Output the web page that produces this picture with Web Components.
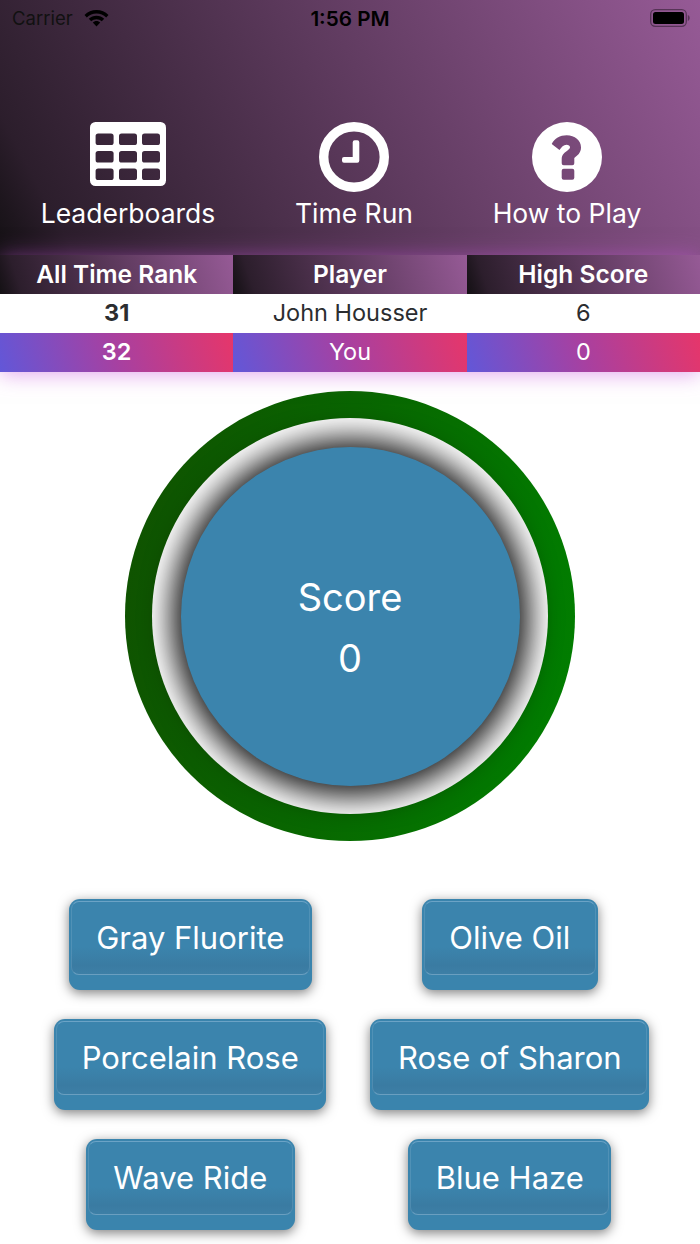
<!DOCTYPE html>
<html lang="en">
<head>
<meta charset="utf-8">
<title>Score</title>
<style>
  html, body {
    margin: 0;
    padding: 0;
    background: #fff;
    font-family: Inter, "Liberation Sans", sans-serif;
  }
</style>
</head>
<body>
<game-screen></game-screen>

<script>
(() => {
  const darkPurple = (angle) => `linear-gradient(${angle}deg, #141114 0%, #1e161e 4%, #2c1e2c 9%, #965a96 100%)`;
  const redViolet = (angle) => `linear-gradient(${angle}deg, #6257d8 0%, #a840a0 50%, #e6366a 100%)`;

  const holes = [];
  for (const y of [11.4, 29, 46.4]) {
    for (const x of [5.6, 29, 52]) {
      holes.push(`<rect x="${x}" y="${y}" width="18" height="11.6" rx="2.6" fill="#000"/>`);
    }
  }

  const ICONS = {
    table: `<svg width="76" height="64" viewBox="0 0 76 64">
      <mask id="grid"><rect width="76" height="64" rx="5.5" fill="#fff"/>${holes.join("")}</mask>
      <rect width="76" height="64" fill="#fff" mask="url(#grid)"/>
    </svg>`,
    clock: `<svg width="70" height="70" viewBox="0 0 70 70">
      <circle cx="35" cy="35" r="30.300" fill="none" stroke="#fff" stroke-width="9.400"/>
      <path fill="#fff" d="M35.700 18.300H38.300a2 2 0 0 1 2 2V38.700a2 2 0 0 1-2 2H25a2 2 0 0 1-2-2V37a2 2 0 0 1 2-2H33.700V20.300a2 2 0 0 1 2-2z"/>
    </svg>`,
    help: `<svg width="70" height="70" viewBox="0 0 70 70">
      <path fill="#fff" fill-rule="evenodd" d="M35 0a35 35 0 1 0 0 70a35 35 0 1 0 0-70z
        M19.700 22C22.500 16.500 28 13.300 34.700 13.300C42.800 13.300 49 18.300 49 25.500C49 31 45.300 33.600 42.300 36V41.300a2 2 0 0 1-2 2H31.700a2 2 0 0 1-2-2V37C29.700 32.500 33 30.300 35.500 28.500C37.200 27.300 38 26.400 38 25.300C38 23.600 36.500 22.700 34.500 22.700C31.500 22.700 29.500 25 27.500 28z
        M31.700 46.700H40.300a2 2 0 0 1 2 2V55.700a2 2 0 0 1-2 2H31.700a2 2 0 0 1-2-2V48.700a2 2 0 0 1 2-2z"/>
    </svg>`,
  };

  class StatusBar extends HTMLElement {
    constructor() {
      super();
      this.attachShadow({ mode: "open" }).innerHTML = `
        <style>
          :host {
            display: grid;
            grid-template-columns: 1fr auto 1fr;
            align-items: center;
            height: 36px;
            padding: 0 12px;
            color: #000;
            font-size: 18.5px;
          }
          .left { display: flex; align-items: center; gap: 11px; color: #111; }
          .time { font-weight: 600; font-size: 20.7px; }
          .right { display: flex; justify-content: flex-end; margin-right: -3px; }
          svg { display: block; }
        </style>
        <div class="left">
          <span>Carrier</span>
          <svg width="25" height="18" viewBox="0.500 1 25 17">
            <path d="M13 1.500C8.300 1.500 4.200 3.300 1 6.500l2.300 2.500C6 6.500 9.300 5 13 5s7 1.500 9.700 4L25 6.500C21.800 3.300 17.700 1.500 13 1.500z"/>
            <path d="M13 7.200c-3 0-5.600 1.100-7.700 3.100l2.400 2.500C9.100 11.500 11 10.700 13 10.700s3.900.8 5.300 2.100l2.400-2.500c-2.100-2-4.700-3.100-7.700-3.100z"/>
            <path d="M13 12.500c-1.500 0-2.800.6-3.700 1.500l3.700 3.900 3.700-3.900c-.9-.9-2.200-1.500-3.700-1.500z"/>
          </svg>
        </div>
        <span class="time">1:56 PM</span>
        <div class="right">
          <svg width="41" height="18" viewBox="0 0 41 18">
            <rect x=".7" y=".7" width="35.600" height="16.600" rx="4.500" fill="none" stroke="#000" stroke-opacity=".4" stroke-width="1.300"/>
            <rect x="3" y="3" width="31" height="12" rx="2.500"/>
            <path d="M37.800 6c1.200.4 1.900 1.600 1.900 3s-.7 2.600-1.900 3z" fill-opacity=".4"/>
          </svg>
        </div>
      `;
    }
  }

  class NavAction extends HTMLElement {
    constructor() {
      super();
      this.attachShadow({ mode: "open" }).innerHTML = `
        <style>
          :host {
            display: flex;
            flex-direction: column;
            align-items: center;
            color: #fff;
            font-size: 26.5px;
            line-height: 32px;
          }
          .icon { height: 70px; display: flex; align-items: flex-start; margin-bottom: 5px; }
          svg { display: block; }
        </style>
        <div class="icon">${ICONS[this.getAttribute("icon")] || ""}</div>
        <slot></slot>
      `;
    }
  }

  class TableCell extends HTMLElement {
    constructor() {
      super();
      this.attachShadow({ mode: "open" }).innerHTML = `
        <style>
          :host {
            display: flex;
            align-items: center;
            justify-content: center;
            box-sizing: border-box;
            height: 39px;
            padding-bottom: 2px;
            font-size: 23.5px;
            color: #2b2d30;
          }
          :host([variant="head"]) {
            background: ${darkPurple(72)};
            color: #fff;
            font-weight: 600;
            font-size: 24.5px;
          }
          :host([variant="mine"]) {
            background: ${redViolet(72)};
            color: #fff;
          }
          :host([strong]) { font-weight: 700; }
          :host([variant="mine"][strong]) { font-weight: 600; }
        </style>
        <slot></slot>
      `;
    }
  }

  class RankTable extends HTMLElement {
    constructor() {
      super();
      this.attachShadow({ mode: "open" }).innerHTML = `
        <style>
          :host {
            display: grid;
            grid-template-columns: repeat(3, 1fr);
            background: #fff;
            position: relative;
            box-shadow: 0 2px 20px rgba(200, 90, 220, .55);
          }
        </style>
        <slot></slot>
      `;
    }
  }

  class ScoreDial extends HTMLElement {
    constructor() {
      super();
      this.attachShadow({ mode: "open" }).innerHTML = `
        <style>
          :host {
            display: flex;
            align-items: center;
            justify-content: center;
            box-sizing: border-box;
            width: 450px;
            height: 450px;
            padding: 27px;
            border-radius: 50%;
            background: linear-gradient(100deg, #105000, #008000);
          }
          .plate {
            flex: 1;
            align-self: stretch;
            display: flex;
            align-items: center;
            justify-content: center;
            border-radius: 50%;
            background: #fff;
          }
          .face {
            box-sizing: border-box;
            display: flex;
            flex-direction: column;
            align-items: center;
            justify-content: center;
            gap: 19px;
            width: 339px;
            height: 339px;
            padding-top: 22px;
            border-radius: 50%;
            background: #3b84ad;
            box-shadow: 0 1px 30px 10px rgba(0, 0, 0, .9);
            color: #fff;
            font-size: 38px;
            line-height: 42px;
          }
        </style>
        <div class="plate">
          <div class="face">
            <span>Score</span>
            <span>${this.getAttribute("value") || "0"}</span>
          </div>
        </div>
      `;
    }
  }

  class AnswerButton extends HTMLElement {
    constructor() {
      super();
      this.attachShadow({ mode: "open" }).innerHTML = `
        <style>
          :host {
            display: block;
            box-sizing: border-box;
            height: 91px;
            padding: 2px 2px 15px;
            border-radius: 11px;
            background: #3a84ad;
            box-shadow: 0 3px 12px rgba(0, 0, 0, .5);
            color: #fff;
            font-size: 31px;
          }
          .face {
            box-sizing: border-box;
            height: 100%;
            display: flex;
            align-items: center;
            justify-content: center;
            padding: 0 24.500px 2px;
            border-radius: 8px;
            border: 1px solid rgba(120, 170, 200, .35);
            border-top-color: #6ba3c6;
            border-bottom-color: #6a9fc0;
            background: linear-gradient(to bottom, #3b84ad 0%, #3b84ad 62%, #3a7ba2 88%, #3d7fa6 100%);
            white-space: nowrap;
          }
        </style>
        <div class="face"><slot></slot></div>
      `;
    }
  }

  class AnswerGrid extends HTMLElement {
    constructor() {
      super();
      this.attachShadow({ mode: "open" }).innerHTML = `
        <style>
          :host {
            display: grid;
            grid-template-columns: 319.500px 319.500px;
            justify-content: center;
            justify-items: center;
            row-gap: 29px;
          }
        </style>
        <slot></slot>
      `;
    }
  }

  class GameScreen extends HTMLElement {
    constructor() {
      super();
      this.attachShadow({ mode: "open" }).innerHTML = `
        <style>
          :host {
            display: block;
            width: 700px;
            height: 1244px;
            overflow: hidden;
            background: #fff;
          }
          .top {
            height: 255px;
            background: ${darkPurple(62)};
            box-sizing: border-box;
          }
          .nav {
            display: grid;
            grid-template-columns: 256px 196px 230px;
            padding-top: 86px;
          }
          .stage {
            display: flex;
            flex-direction: column;
            align-items: center;
            padding-top: 19px;
          }
          answer-grid { margin-top: 58px; }
        </style>
        <div class="top">
          <status-bar></status-bar>
          <div class="nav">
            <nav-action icon="table">Leaderboards</nav-action>
            <nav-action icon="clock">Time Run</nav-action>
            <nav-action icon="help">How to Play</nav-action>
          </div>
        </div>
        <rank-table>
          <table-cell variant="head">All Time Rank</table-cell>
          <table-cell variant="head">Player</table-cell>
          <table-cell variant="head">High Score</table-cell>
          <table-cell strong>31</table-cell>
          <table-cell>John Housser</table-cell>
          <table-cell>6</table-cell>
          <table-cell variant="mine" strong>32</table-cell>
          <table-cell variant="mine">You</table-cell>
          <table-cell variant="mine">0</table-cell>
        </rank-table>
        <div class="stage">
          <score-dial value="0"></score-dial>
          <answer-grid>
            <answer-button>Gray Fluorite</answer-button>
            <answer-button>Olive Oil</answer-button>
            <answer-button>Porcelain Rose</answer-button>
            <answer-button>Rose of Sharon</answer-button>
            <answer-button>Wave Ride</answer-button>
            <answer-button>Blue Haze</answer-button>
          </answer-grid>
        </div>
      `;
    }
  }

  window.customElements.define("status-bar", StatusBar);
  window.customElements.define("nav-action", NavAction);
  window.customElements.define("table-cell", TableCell);
  window.customElements.define("rank-table", RankTable);
  window.customElements.define("score-dial", ScoreDial);
  window.customElements.define("answer-button", AnswerButton);
  window.customElements.define("answer-grid", AnswerGrid);
  window.customElements.define("game-screen", GameScreen);
})();
</script>
</body>
</html>
